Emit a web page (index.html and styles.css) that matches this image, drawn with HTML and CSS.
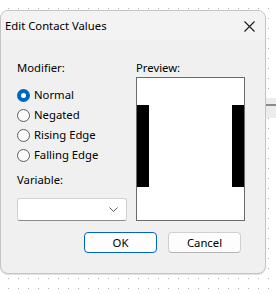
FILE: index.html
```html
<!DOCTYPE html>
<html lang="en">
<head>
  <meta charset="UTF-8">
  <title>Edit Contact Values</title>
  <link rel="stylesheet" href="styles.css">
</head>
<body>

<div class="canvas">
  <div class="dialog">
    <div class="titlebar">
      <span class="title">Edit Contact Values</span>
      <svg class="close" width="11" height="11" viewBox="0 0 11 11">
        <path d="M0.5 0.5 L10.5 10.5 M10.5 0.5 L0.5 10.5" stroke="#1a1a1a" stroke-width="1.1" fill="none"/>
      </svg>
    </div>

    <div class="content">
      <div class="col-left">
        <div class="label">Modifier:</div>
        <div class="radios">
          <div class="radio checked"><span class="mark"></span>Normal</div>
          <div class="radio"><span class="mark"></span>Negated</div>
          <div class="radio"><span class="mark"></span>Rising Edge</div>
          <div class="radio"><span class="mark"></span>Falling Edge</div>
        </div>
        <div class="label var-label">Variable:</div>
        <div class="combo">
          <svg class="chevron" width="9" height="5" viewBox="0 0 9 5">
            <path d="M0.5 0.5 L4.5 4.5 L8.5 0.5" stroke="#555" stroke-width="1" fill="none"/>
          </svg>
        </div>
      </div>

      <div class="col-right">
        <div class="label">Preview:</div>
        <div class="preview">
          <div class="bar"></div>
          <div class="bar"></div>
        </div>
      </div>
    </div>

    <div class="buttons">
      <button class="btn btn-default">OK</button>
      <button class="btn">Cancel</button>
    </div>
  </div>

  <div class="rail"><div class="rail-line"></div></div>
</div>

</body>
</html>
```

FILE: styles.css
```css
body {
  margin: 0;
  font-family: "Noto Sans", "DejaVu Sans", sans-serif;
  font-size: 11.3px;
  color: #000;
  background-color: #fff;
  background-image: radial-gradient(circle at 8.5px 8.5px, #b0b0b0 0.6px, transparent 1px);
  background-size: 10px 10px;
  min-height: 294px;
}

.canvas {
  display: flex;
  align-items: flex-start;
  padding-top: 10px;
}

.dialog {
  box-sizing: border-box;
  width: 266px;
  height: 264px;
  flex-shrink: 0;
  background: #f0f0f0;
  border: 1px solid #c4c4c4;
  border-radius: 8px;
  box-shadow: 0 1px 1px rgba(0, 0, 0, 0.12);
  overflow: hidden;
}

.titlebar {
  height: 29px;
  display: flex;
  align-items: center;
  justify-content: space-between;
  padding: 0 10px 0 4px;
  background: #f3f3f3;
}

.title {
  line-height: 16px;
  padding-top: 1px;
}

.close {
  display: block;
  margin-top: 1px;
}

.content {
  display: grid;
  grid-template-columns: 110px 109px;
  column-gap: 9px;
  padding: 20px 0 0 16px;
}

.label {
  line-height: 16px;
  height: 16px;
}

.radios {
  margin-top: 9px;
}

.radio {
  height: 20px;
  display: flex;
  align-items: center;
  line-height: 16px;
}

.mark {
  box-sizing: border-box;
  width: 13px;
  height: 13px;
  border-radius: 50%;
  border: 1px solid #5d5d5d;
  background: #fbfbfb;
  margin-right: 4px;
  flex-shrink: 0;
}

.radio.checked .mark {
  border: 4px solid #0067c0;
  background: #fff;
}

.var-label {
  margin-top: 7px;
}

.combo {
  box-sizing: border-box;
  margin-top: 10px;
  width: 110px;
  height: 23px;
  background: #fff;
  border: 1px solid #d2d2d2;
  border-bottom-color: #8a8a8a;
  border-radius: 3px;
  display: flex;
  align-items: center;
  justify-content: flex-end;
  padding-right: 8px;
}

.chevron {
  display: block;
}

.preview {
  box-sizing: border-box;
  height: 144px;
  margin-top: 1px;
  background: #fff;
  border: 1px solid #6b6b6b;
  display: flex;
  justify-content: space-between;
  align-items: flex-start;
  padding-top: 27px;
}

.bar {
  width: 12px;
  height: 82px;
  background: #000;
}

.buttons {
  display: flex;
  justify-content: flex-end;
  gap: 11px;
  padding-right: 24px;
  margin-top: 11px;
}

.btn {
  box-sizing: border-box;
  width: 73px;
  height: 21px;
  padding: 0;
  font-family: inherit;
  font-size: 11.3px;
  color: #000;
  background: #fdfdfd;
  border: 1px solid #d0d0d0;
  border-bottom-color: #b5b5b5;
  border-radius: 4px;
}

.btn-default {
  border: 1px solid #0067c0;
}

.rail {
  width: 10px;
  height: 20px;
  margin-top: 88px;
  background: #ececec;
  padding-top: 6px;
  box-sizing: border-box;
}

.rail-line {
  height: 2px;
  background: #8a8a8a;
}
```
